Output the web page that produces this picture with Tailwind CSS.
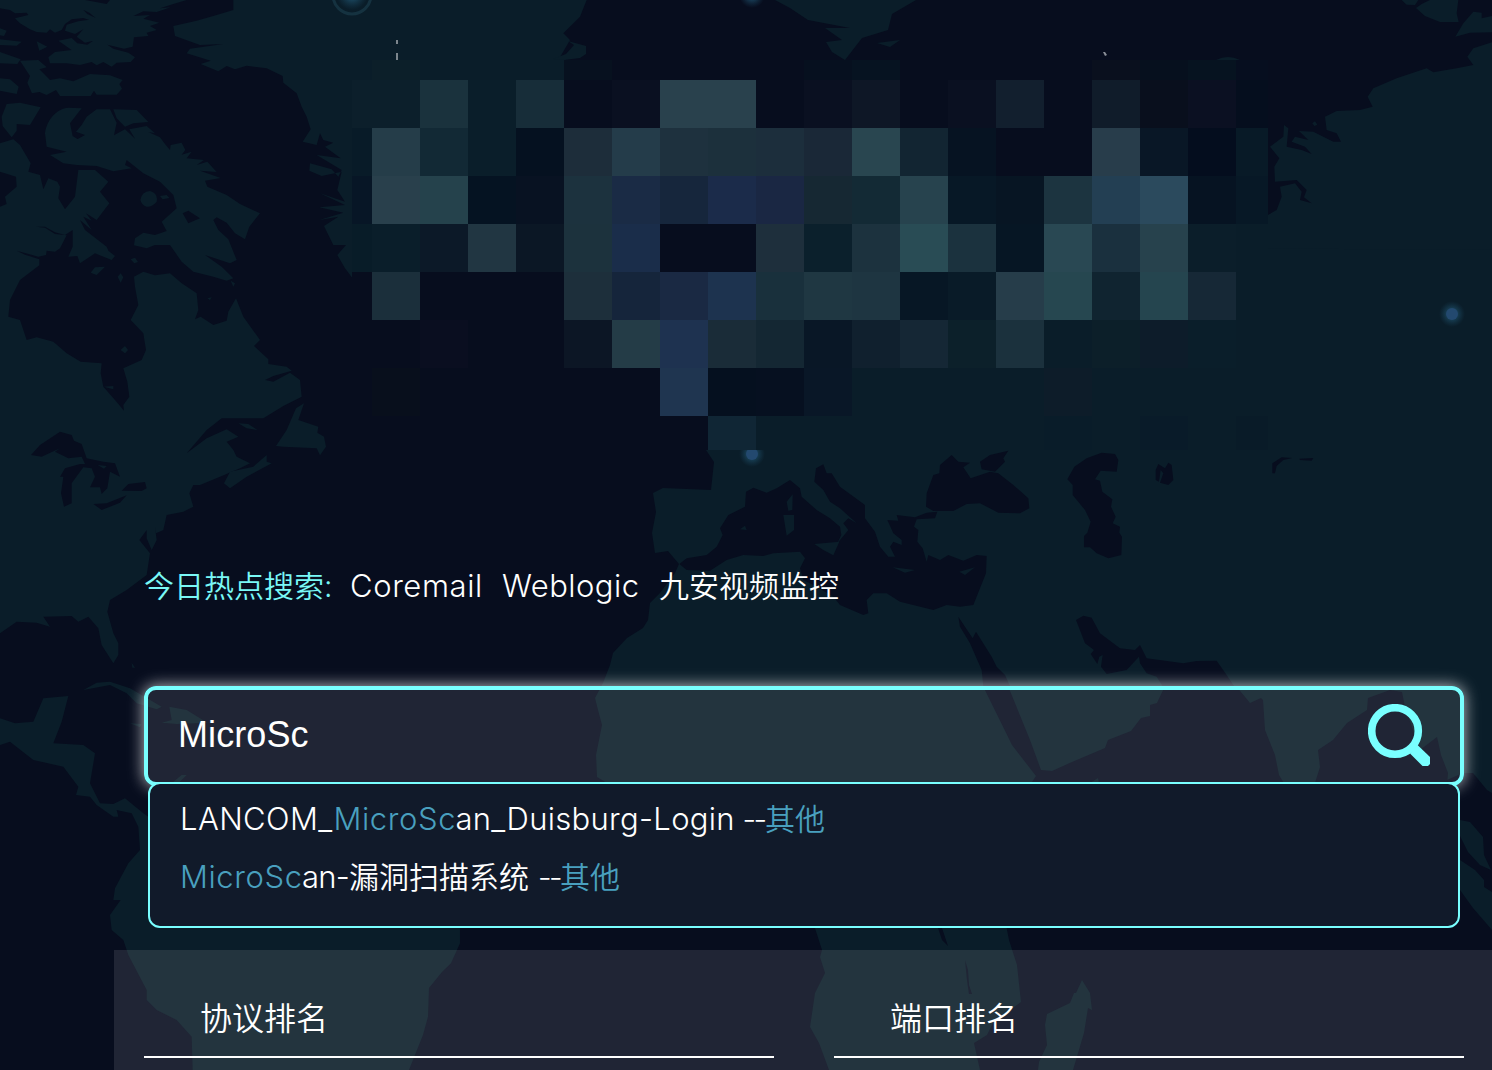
<!DOCTYPE html>
<html lang="zh-CN">
<head>
<meta charset="utf-8">
<title>今日热点搜索</title>
<script src="https://cdn.jsdelivr.net/npm/@tailwindcss/browser@4"></script>
</head>
<body class="bg-[#070d1e]">
<div class="relative w-[1492px] h-[1070px] overflow-hidden bg-[#070d1e] text-white font-[350] font-[Inter,'Noto_Sans_CJK_SC',sans-serif]">

  <!-- world map backdrop -->
  <svg class="absolute inset-0" width="1492" height="1070" viewBox="0 0 1492 1070" fill="#0a1d29">
    <defs>
      <radialGradient id="glow"><stop offset="0" stop-color="#2b6e96" stop-opacity=".8"/><stop offset=".5" stop-color="#24607f" stop-opacity=".4"/><stop offset="1" stop-color="#1d4c66" stop-opacity="0"/></radialGradient>
    </defs>
    <!-- the Americas and Greenland -->
    <g transform="scale(.33333)" stroke-linejoin="round">
      <path d="M0 0H200L215 12 245 25 262 42 300 60 322 72 285 66 250 54 215 58 195 72 185 90 165 98 150 88 140 98 110 96 90 88 60 70 45 55 85 45 80 38 45 40 30 30 0 25ZM200 0H255L320 12 330 0H560L520 12 480 25 512 22 470 36 430 34 400 48 450 45 430 56 478 68 450 78 470 90 440 98 445 108 402 112 398 140 372 146 322 134 340 146 385 158 405 172 392 186 350 188 335 200 310 186 290 196 275 186 240 195 200 190 150 190 145 172 165 156 215 150 175 122 215 114 232 130 262 134 305 105 280 122 255 128 230 110 250 88 225 102 195 92 200 74 235 64 290 56 268 38 240 25 210 16Z"/>
      <path d="M0 85L20 92 12 108 0 106ZM0 118L65 125 50 137 0 135ZM0 156L62 178 52 192 0 190ZM110 124L142 140 118 152ZM60 182L115 180 140 202 118 208 150 240 180 235 220 244 270 222 330 226 368 240 358 252 366 266 350 284 290 284 282 272 272 288 180 288 168 270 140 285 118 276 96 280 82 248 90 228ZM0 235L30 238 56 260 50 282 0 272ZM5 350L20 312 60 308 122 322 90 375 50 372 50 392 35 412 8 378Z"/>
      <path d="M135 400C140 360 170 325 205 323L245 325 210 370 218 408 252 430 250 458 228 420 255 405 228 395 245 375 260 350 290 328 330 328 350 368 342 406 375 388 405 416 388 388 440 378 465 400 445 396 480 412 495 432 510 450 512 435 545 428 556 450 545 464 575 455 560 475 612 480 590 495 622 485 650 516 600 512 662 534 615 542 622 560 680 585 720 612 780 640 748 680 735 718 705 700 680 668 650 652 640 660 655 690 685 718 710 780 690 790 615 765 665 800 700 835 680 842 640 830 580 815 545 785 510 735 465 735 440 745 402 736 405 715 430 698 465 705 500 693 485 665 530 625 520 585 480 545 430 520 380 480 375 495 395 505 340 514 290 498 230 495 190 490 150 465 200 455 140 440Z"/>
      <path d="M340 328L410 330 445 366 400 370 375 380 350 355ZM421 600Q425 575 450 573 475 580 470 605 455 622 440 620 425 615 421 600ZM272 818L285 802 315 800 290 825ZM392 778L405 773 414 786 403 790ZM353 830L362 820 370 832 362 848ZM480 588L500 585 508 594 488 598Z"/>
      <path d="M0 430L40 418 60 435 92 490 85 515 120 525 130 568 145 535 172 545 180 560 175 595 195 628 225 590 235 510 285 510 325 545 300 575 328 610 290 660 258 640 275 662 250 650 275 690 240 660 255 690 320 740 325 752 345 768 335 780 285 760 240 790 232 768 205 770 218 740 218 690 195 705 165 697 135 680 108 680 135 683 165 702 200 706 180 745 165 755 140 752 138 765 115 770 50 752 75 764 118 778 118 796 60 840 30 900 25 950 60 960 80 1020 110 1012 160 1025 200 1060 242 1085 305 1090 302 1120 310 1160 345 1200 372 1232 370 1215 388 1190 382 1145 370 1105 425 1080 438 1050 430 1000 392 960 415 915 405 860 402 830 430 815 465 826 510 820 545 850 590 880 595 930 585 958 602 950 640 975 680 962 685 935 708 895 730 950 780 1020 762 1038 805 1078 805 1092 860 1100 875 1112 820 1128 795 1140 820 1145 870 1118 900 1140 905 1190 850 1218 790 1255 665 1255 620 1290 560 1360 620 1315 680 1288 715 1310 680 1325 700 1350 710 1370 750 1390 720 1405 660 1430 600 1455 580 1455 568 1480 580 1520 550 1535 500 1545 490 1590 468 1600 465 1580 470 1620 455 1650 440 1615 440 1590 418 1620 450 1660 440 1725 380 1770 330 1800 322 1835 340 1900 355 1930 355 1965 340 1990 305 1935 295 1885 265 1850 235 1865 215 1848 130 1850 150 1880 110 1868 50 1865 0 1900Z"/>
      <path d="M672 1450L690 1415 760 1400 800 1365 800 1385 815 1390 740 1430 690 1465ZM715 1270L745 1272 772 1290 740 1285ZM828 1338L860 1290 888 1225 912 1210 895 1260 955 1280 952 1298 972 1310 978 1340 960 1366 950 1345 850 1340Z"/>
      <path d="M700 0L700 30 650 45 590 62 520 78 525 108 600 135 670 132 570 146 560 160 632 182 602 192 655 214 680 198 705 208 740 197 800 205 848 228 850 248 890 280 905 320 920 350 932 388 908 425 950 435 960 400 970 420 1000 428 975 440 1022 475 950 465 1025 510 1015 530 995 508 930 490 928 512 965 528 1025 515 1012 570 1035 605 960 580 1035 615 958 622 1030 638 958 660 1015 650 972 678 1000 735 1038 735 1012 765 1035 805 1060 838 1400 838 1700 180 1680 172 1710 120 1690 100 1740 50 1760 0Z"/>
      <path d="M0 2155L45 2170 100 2165 130 2095 205 2088 185 2165 160 2230 250 2235 285 2260 270 2350 300 2410 340 2412 375 2395 430 2440 445 2450V2370L900 2370 1380 2784 1380 2830 1353 2890 1326 2916 1287 2964 1284 3050 1269 3105 1227 3210H578L575 3110 530 3060 470 3030 440 3000 440 2970 385 2865 370 2820 335 2790 330 2745 362 2700 340 2700 345 2665 385 2590 420 2550 415 2480 395 2440 350 2430 355 2450 340 2450 290 2415 270 2390 228 2385 235 2360 190 2300 100 2280 30 2225 0 2235Z"/>
      <path d="M250 2070L290 2048 330 2045 390 2065 485 2120 470 2128 410 2110 380 2080 330 2055ZM485 2168L515 2160 508 2120 560 2130 622 2168 530 2172ZM395 1988L405 2003 397 2003ZM390 2170L425 2172 420 2182ZM515 2350L545 2325 560 2325 535 2350Z"/>
      <g fill="#070d1e">
        <path d="M93 1365L120 1335 180 1295 215 1305 222 1322 245 1332 260 1375 310 1385 345 1390 360 1430 330 1415 322 1465 305 1482 300 1462 270 1462 285 1430 275 1405 250 1402 215 1450 215 1510 192 1520 183 1480 190 1430 180 1430 195 1405 240 1392 255 1392 245 1370 205 1375 165 1355 180 1345 125 1370ZM365 1472L385 1452 435 1446 440 1465 425 1473ZM280 1512L320 1510 380 1486 360 1508 305 1530Z"/>
        <path d="M0 515L48 530 50 560 15 590 20 612 0 620ZM548 640L565 632 600 655 565 670Z"/>
      </g>
      <path d="M293 1395L320 1398 312 1406ZM312 1160L340 1158 340 1168ZM362 1050L375 1038 384 1050 375 1060ZM622 895L635 892 630 900ZM692 842L705 850 700 860Z"/>
    </g>
    <!-- Europe, Africa, Asia -->
    <path d="M708 450L750 425 1262 240H1492V793L1487 790 1473 773 1463 773 1440 783H607L597 777 596 755 602 725 598 710 595 698 603 683 610 665 613 653 627 638 643 628 648 620 650 603 660 593 675 573 679 564 668 551 655 553 652 533 656 512 653 493 663 488 711 490 714 462 706 450Z"/>
    <path d="M814 925L822 950 820 957 825 973 815 993 810 1027 819 1043 829 1070H980L974 1043 987 1035 993 1023 1021 1002 1017 965 1009 940 1006 925ZM1082 980L1076 993 1074 993 1070 1003 1047 1014 1045 1025 1047 1045 1039 1062 1038 1070H1073L1084 1033 1088 1008 1092 1010 1090 993Z"/>
    <path d="M775 0H916L892 14 888 30 862 38 845 60 832 52 826 42 842 40 825 28 850 28 808 20 790 8ZM877 43L900 40 890 47ZM1216 60Q1228 54 1240 60ZM553 59L566 54 574 45 568 41 586 46 586 54 580 58 564 60Z"/>
    <g transform="translate(1180 0) scale(.33333)">
      <path d="M240 745L264 645 290 630 305 590 300 560 345 550 365 575 360 600 395 610 372 592 380 570 350 540 285 545 283 500 298 475 270 440 310 410 312 375 325 385 320 440 365 450 395 462 375 440 335 425 345 410 385 420 357 393 400 395 460 425 483 425 470 400 440 390 435 350 470 333 540 330 578 320 563 290 580 265 650 235 740 205 760 217 830 205 880 195 862 170 880 145 936 127V750ZM665 0H715L705 15 680 14ZM725 12L750 0H835L830 40 836 66 780 66 735 48 708 24ZM826 110L850 70 880 35 905 38 905 55 936 48V97L870 98ZM397 370L405 364 412 374 403 378Z"/>
    </g>
    <g fill="#070d1e">
      <g transform="translate(600 430) scale(.33333)">
        <path d="M238 402L260 385 320 375 350 350 368 315 360 295 385 255 435 230 438 185 460 173 500 188 530 175 570 150 600 175 605 200 650 240 690 265 720 290 724 315 712 340 745 300 730 280 745 265 770 280 720 235 690 215 670 180 643 155 648 115 670 103 680 130 695 130 720 170 795 225 795 265 825 305 840 350 865 380 885 380 870 350 880 335 905 345 905 330 880 310 862 270 895 272 890 255 945 262 980 248 1012 245 1005 265 950 268 942 290 955 300 952 335 968 355 980 395 985 375 1020 390 1045 375 1090 392 1130 375 1160 378 1158 430 1120 525 1080 530 1040 525 1000 540 900 515 860 490 820 490 800 510 805 550 790 555 720 525 700 500 650 470 610 450 600 415 615 385 600 365 520 370 490 378 430 375 380 390 330 422 260 420Z"/>
        <path d="M1055 75L1075 95 1110 98 1090 112 1112 145 1170 125 1195 130 1240 165 1285 205 1288 235 1260 250 1195 248 1140 220 1100 222 1060 243 1000 243 978 230 980 190 1000 135 1018 130 1020 105ZM1140 95L1170 75 1225 62 1210 85 1215 95 1185 125 1145 118ZM1075 560L1118 625 1128 605 1175 680 1190 710 1215 735 1230 768H1150L1145 720 1110 640 1080 590Z"/>
        <g fill="#0a1d29"><path d="M643 342L718 335 700 376 670 360ZM550 255L582 255 582 300 560 317ZM560 215L578 193 577 240 565 242ZM878 412L945 420 915 428ZM1078 425L1125 412 1095 435ZM420 298L435 287 440 300Z"/></g>
      </g>
      <g transform="translate(1040 430) scale(.33333)">
        <path d="M185 68L225 72 235 90 230 125 182 122 165 148 180 152 187 185 217 208 213 230 227 260 218 280 240 290 238 308 246 320 244 375 205 385 170 370 150 352 132 352 132 318 142 308 152 275 135 240 98 195 98 165 82 148 103 110 140 85ZM355 102L375 115 385 98 395 105 400 150 385 165 360 158 370 130 362 120 357 155 347 150 347 120ZM697 130L697 100 725 82 757 84 730 90 710 108 705 130ZM778 86L820 84 815 92 780 90Z"/>
        <path d="M108 570L130 557 155 563 180 610 240 655 285 660 300 645 320 685 430 700 470 693 530 692 560 735 590 780H375L350 740 320 730 300 700 297 680 260 720 200 732 183 710 188 675 178 680 172 702 152 672 162 660 135 640Z"/>
      </g>
      <path d="M983 686L1008 686 1030 740 1041 770 1052 771 1072 762 1105 748 1108 740 1131 731 1141 718 1150 716 1150 705 1157 703 1165 686H1236L1250 703 1261 698 1263 700 1265 730 1275 755 1279 775 1285 785H1030L1036 776 1012 745ZM1315 783L1320 767 1318 750 1333 740 1347 723 1367 710 1368 698 1390 690 1402 692 1405 707 1420 750 1437 737 1441 755 1448 773 1447 785Z"/>
      <path d="M942 928L948 946 942 940 938 928ZM965 960L968 970 969 985 972 994 969 994 967 980Z"/>
    </g>
    <path d="M1460 820L1470 822 1483 837 1484 855 1491 870 1480 865 1468 852 1460 836ZM1460 860L1475 870 1484 880 1484 887 1492 892V930L1473 908 1460 890ZM1090 783L1098 778 1099 783Z"/>
    <!-- node markers -->
    <circle cx="1452" cy="314" r="13" fill="url(#glow)"/><circle cx="1452" cy="314" r="6" fill="#23496f"/>
    <circle cx="752" cy="454" r="13" fill="url(#glow)"/><circle cx="752" cy="454" r="6" fill="#23496f"/>
    <circle cx="752" cy="-5" r="13" fill="url(#glow)"/>
    <circle cx="352" cy="-5" r="19" fill="none" stroke="#153240" stroke-width="3"/><circle cx="352" cy="-6" r="16" fill="url(#glow)"/>
    <path d="M396 40h2v4h-2ZM396 53h2v7h-2Z" fill="#7c858c"/><path d="M1103 52l2 0 2 3-2 1Z" fill="#8a8f98"/>
  </svg>

  <main class="relative flex flex-col">
    <div id="logo" class="mt-[60px] ml-[352px] grid w-[916px] h-[390px] grid-cols-[20px_repeat(18,48px)_32px] grid-rows-[20px_repeat(7,48px)_34px]"></div>

    <div class="mt-[114px] ml-36 flex h-11 items-center text-[30px] whitespace-nowrap">
      <span class="w-[206px] text-[#79f8f6]">今日热点搜索:</span>
      <span class="w-[152px] text-[31px] tracking-[0.6px]">Coremail</span>
      <span class="w-[157px] text-[31px] tracking-[0.45px]">Weblogic</span>
      <span>九安视频监控</span>
    </div>

    <div class="mt-[78px] ml-36 flex h-[100px] w-[1320px] items-center justify-between rounded-xl border-4 border-[#79ffff] bg-white/10 px-[30px] shadow-[0_0_16px_rgba(255,255,255,0.75)]">
      <span class="-mt-[3px] font-['Liberation_Sans',sans-serif] text-[36px] font-normal tracking-[0.1px]">MicroSc</span>
      <svg class="-mt-0.5" width="62" height="62" viewBox="0 0 62 62"><circle cx="27" cy="27" r="23.3" fill="none" stroke="#79ffff" stroke-width="7.6"/><path d="M42 49.5L54.5 62H60L62 60V53L49.5 41Z" fill="#79ffff"/></svg>
    </div>

    <div class="-mt-1 ml-[148px] flex h-[146px] w-[1312px] flex-col rounded-xl border-2 border-[#79ffff] bg-[#111a2a] pt-1.5 pl-[30px] text-[30px] whitespace-nowrap">
      <div class="flex h-[58px] leading-[58px]"><span class="w-[153.5px] text-[31px] tracking-[0.4px]">LANCOM_</span><span class="w-[122px] text-[31px] tracking-[0.6px] text-[#49a0bf]">MicroSc</span><span class="w-[287px] text-[31px] tracking-[0.3px]">an_Duisburg-Login</span><span class="w-[22.5px] tracking-[-2.5px]">--</span><span class="text-[#49a0bf]">其他</span></div>
      <div class="flex h-[58px] leading-[58px]"><span class="w-[122px] text-[31px] tracking-[0.6px] text-[#49a0bf]">MicroSc</span><span class="w-[47px] text-[31px] tracking-[-0.8px]">an-</span><span class="w-[189px]">漏洞扫描系统</span><span class="w-[22px] tracking-[-2.5px]">--</span><span class="text-[#49a0bf]">其他</span></div>
    </div>

    <div class="mt-[22px] ml-[114px] flex h-[120px] gap-[60px] bg-white/10 pl-[30px] pt-7">
      <h2 class="h-20 w-[630px] border-b-2 border-white pl-14 text-[32px] leading-[82px]">协议排名</h2>
      <h2 class="h-20 w-[630px] border-b-2 border-white pl-14 text-[32px] leading-[82px]">端口排名</h2>
    </div>
  </main>
</div>
<script>
  const L = '0a1d29', S = '070d1e';
  const rows = [
    [L,'0c1f29',L,L,L,'07111f',S,S,S,S,'06101f','061321',S,S,S,S,'0a101e','06101e','061320','060e1f'],
    ['0c1f2b','0c1f2b','1a323d','0a1e2a','172d39',S,'0a1021','29414d','29414d',S,'0a1021','0e1726',S,'0a1021','121f2e',S,'101c2a','090f1d','0b1022','050e1e'],
    ['081b28','253d49','122935','0a1e2a','051120','1d2d3a','243c4a','1e313e','1c303c','1c2e3c','1a2837','294650','122532','061322',S,S,'283d4b','091726','040d1e','081a27'],
    ['071626','29404c','25424c','051322','081222','1c323e','1a2b45','16263c','1b2b4a','1a2743','162833','132a35','27434e','071826','071523','1c3440','233f53','2b4a5d','061322','071826'],
    ['081c28','0a1e2a','0c1928','213642','0b1725','1c323d','1a2d4a',S,S,'1e2f3c','0b202c','1c323e','294c55','1b323e','061624','294853','1a303e','27424d','0b1e2a',L],
    [S,'1b2f3b',S,S,S,'1d2f3b','15253b','1a2943','1d334f','19303c','1f3742','1e3541','071725','091b28','263d4a','264750','102430','25454f','162836',L],
    [S,S,'0a0e20',S,S,'0c1625','243c47','1e3250','1a2c38','142733','091726','10202e','152735','0c202a','1b313d',L,'0c1f29','0d1c2a','0a1e2a',L],
    [S,'080f1c',S,S,S,S,S,'1f3550','05101f','061020','091727',L,L,L,L,'0d1c29',L,L,L,L],
    [S,S,S,S,S,S,S,S,'102635',L,L,L,L,L,L,'091c29',L,'091b29',L,'091b28']
  ];
  const logo = document.getElementById('logo');
  rows.flat().forEach(c => {
    const d = document.createElement('div');
    d.style.backgroundColor = '#' + c;
    logo.appendChild(d);
  });
</script>
</body>
</html>
